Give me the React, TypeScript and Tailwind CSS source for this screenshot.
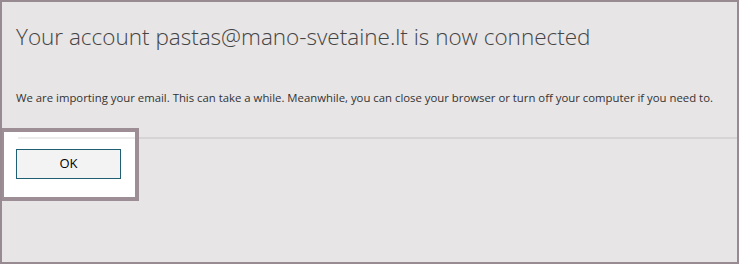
export default function App() {
  return (
    <div className="relative w-[739px] h-[264px] bg-[#e7e5e6] border-2 border-[#978a90] overflow-hidden">
      <div className="pl-[14px] pt-[20px]">
        <h1
          className="text-[22.5px] leading-[30px] font-light text-[#444444]"
          style={{ fontFamily: '"Open Sans", "Liberation Sans", sans-serif' }}
        >
          Your account pastas@mano-svetaine.lt is now connected
        </h1>
        <p
          className="mt-[38px] text-[11.35px] leading-[16px] text-[#333333]"
          style={{ fontFamily: '"Open Sans", "Liberation Sans", sans-serif' }}
        >
          We are importing your email. This can take a while. Meanwhile, you can close your browser or turn off your computer if you need to.
        </p>
      </div>
      <div className="ml-[14px] mt-[31px] h-[2px] bg-[#d6d4d5]" />
      <div className="relative z-10 pl-[14px] pt-[10px]">
        <button
          className="w-[105px] h-[30px] bg-[#f3f3f3] border border-[#1f5f73] text-[13px] font-medium text-black"
          style={{ fontFamily: '"Open Sans", "Liberation Sans", sans-serif' }}
        >
          OK
        </button>
      </div>
      <div className="absolute left-[-2px] top-[126px] w-[139px] h-[73px] border-4 border-[#9c8e94] bg-white">
        <div className="ml-[14px] mt-[5px] h-[2px] bg-[#ebebeb]" />
      </div>
    </div>
  );
}
